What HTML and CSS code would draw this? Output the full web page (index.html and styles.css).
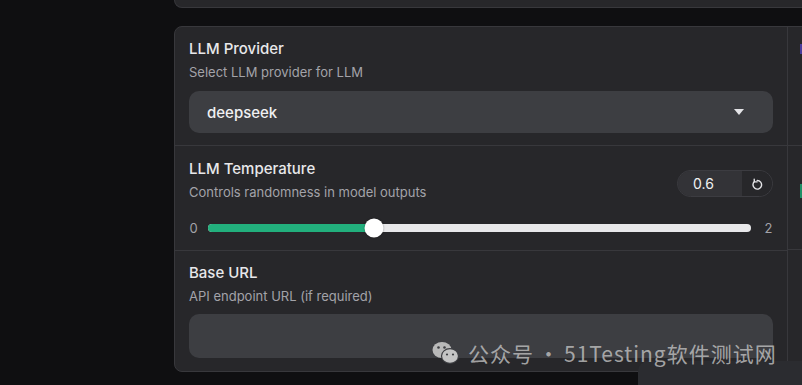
FILE: index.html
```html
<!DOCTYPE html>
<html lang="en">
  <head>
    <meta charset="UTF-8" />
    <meta name="viewport" content="width=device-width, initial-scale=1.0" />
    <title>LLM Settings</title>
    <link rel="stylesheet" href="styles.css">
  </head>
  <body>
    <div class="page">
      <div class="prevCard"></div>
      <section class="settings">
        <div class="col">
          <div class="field">
            <label class="fieldLabel">LLM Provider</label>
            <p class="fieldInfo">Select LLM provider for LLM</p>
            <div class="select">
              <span>deepseek</span>
              <svg class="caret" width="10" height="6" viewBox="0 0 10 6"><path d="M0 0h10L5 6z" fill="#e4e4e7"/></svg>
            </div>
          </div>
          <div class="field">
            <div class="fieldHead">
              <div>
                <label class="fieldLabel">LLM Temperature</label>
                <p class="fieldInfo">Controls randomness in model outputs</p>
              </div>
              <div class="numBox">
                <span class="numVal">0.6</span>
                <button class="resetBtn">
                  <svg width="12" height="12" viewBox="0 0 12 12" fill="none" stroke="#e4e4e7" stroke-width="1.4" stroke-linecap="round" stroke-linejoin="round">
                    <path d="M3.4 3.6A4.3 4.3 0 1 0 6.2 2.5"/>
                    <path d="M3.2 1.2L3.4 3.8L6 3.9"/>
                  </svg>
                </button>
              </div>
            </div>
            <div class="slider">
              <span class="sliderEnd">0</span>
              <div class="track">
                <div class="fill" style="width: 30.5%"></div>
                <div class="thumb" style="left: 30.5%"></div>
              </div>
              <span class="sliderEnd">2</span>
            </div>
          </div>
          <div class="field last">
            <label class="fieldLabel">Base URL</label>
            <p class="fieldInfo">API endpoint URL (if required)</p>
            <div class="textInput"></div>
          </div>
        </div>
        <div class="col side">
          <div class="sideBlock">
            <span class="mark purple"></span>
          </div>
          <div class="sideBlock">
            <span class="mark green"></span>
          </div>
          <div class="sideBlock"></div>
        </div>
      </section>
    </div>
    <div class="toastEdge"></div>
    <div class="watermark">
      <svg width="28" height="24" viewBox="0 0 28 24">
        <ellipse cx="10" cy="9" rx="9.5" ry="8" fill="#b9b9b9"/>
        <ellipse cx="18" cy="15" rx="8.5" ry="7.3" fill="#c4c4c4" stroke="#3d3e42" stroke-width="1.2"/>
        <circle cx="6.5" cy="6.5" r="1.3" fill="#3d3e42"/>
        <circle cx="12.5" cy="6.5" r="1.3" fill="#3d3e42"/>
        <circle cx="15" cy="13.5" r="1.1" fill="#3d3e42"/>
        <circle cx="21" cy="13.5" r="1.1" fill="#3d3e42"/>
      </svg>
      <span>公众号<span class="dot">·</span>51Testing软件测试网</span>
    </div>
  </body>
</html>
```

FILE: styles.css
```css
html {
  background: #0f0f11;
}
body {
  margin: 0;
  font-family: Inter, 'Noto Sans', sans-serif;
  color: #e8e8ea;
  overflow: hidden;
  height: 385px;
  position: relative;
}
.page {
  padding-left: 174px;
}
.prevCard {
  height: 7px;
  background: #27272a;
  border: 1px solid #38383c;
  border-top: none;
  border-radius: 0 0 0 8px;
  margin-right: -10px;
}
.settings {
  margin-top: 18px;
  margin-right: -200px;
  display: grid;
  grid-template-columns: 612px 1fr;
  background: #27272a;
  border: 1px solid #38383c;
  border-radius: 8px;
}
.col {
  display: flex;
  flex-direction: column;
}
.col.side {
  border-left: 1px solid #38383c;
}
.field {
  padding: 12px 14px 12px 14px;
  border-bottom: 1px solid #38383c;
}
.field.last {
  border-bottom: none;
  padding-bottom: 13px;
}
.fieldLabel {
  display: block;
  font-size: 15px;
  font-weight: 500;
  line-height: 20px;
  color: #e8e8ea;
}
.fieldInfo {
  margin: 4px 0 0;
  font-size: 13px;
  line-height: 18px;
  color: #a3a3a9;
}
.select {
  margin-top: 10px;
  height: 42px;
  background: #3d3e42;
  border-radius: 10px;
  display: flex;
  align-items: center;
  justify-content: space-between;
  padding: 0 29px 0 18px;
  font-size: 15px;
  font-weight: 500;
  color: #f0f0f2;
}
.fieldHead {
  display: flex;
  justify-content: space-between;
  align-items: flex-start;
}
.fieldHead .fieldLabel {
  margin-top: 1px;
}
.numBox {
  margin-top: 12px;
  display: flex;
  height: 27px;
  width: 96px;
  border: 1px solid #3c3c41;
  border-radius: 14px;
  overflow: hidden;
  box-sizing: border-box;
}
.numVal {
  flex: 1;
  background: #333337;
  font-size: 14px;
  line-height: 25px;
  padding-left: 15px;
  color: #f0f0f2;
}
.resetBtn {
  width: 30px;
  border: none;
  background: #27272a;
  padding: 0;
  display: flex;
  align-items: center;
  justify-content: center;
}
.slider {
  margin-top: 17px;
  display: flex;
  align-items: center;
  gap: 10px;
  height: 20px;
}
.sliderEnd {
  font-size: 13px;
  color: #a3a3a9;
  width: 9px;
  text-align: center;
}
.track {
  flex: 1;
  height: 8px;
  border-radius: 4px;
  background: #e8e8ea;
  position: relative;
  margin-right: 3px;
}
.fill {
  height: 100%;
  border-radius: 4px;
  background: #22b07d;
}
.thumb {
  position: absolute;
  top: 50%;
  width: 19px;
  height: 19px;
  border-radius: 50%;
  background: #fff;
  transform: translate(-50%, -50%);
  box-shadow: 0 0 2px rgba(0, 0, 0, 0.4);
}
.textInput {
  margin-top: 9px;
  height: 44px;
  background: #3d3e42;
  border-radius: 10px;
}
.sideBlock {
  height: 119px;
  border-bottom: 1px solid #38383c;
  padding: 17px 0 0 12px;
  box-sizing: border-box;
}
.sideBlock:nth-child(2) {
  height: 104px;
  padding-top: 38px;
}
.sideBlock:last-child {
  border-bottom: none;
}
.mark {
  display: block;
  width: 6px;
  height: 10px;
}
.mark.purple {
  background: #4a3c9c;
}
.mark.green {
  background: #1f8f66;
  height: 14px;
}
.toastEdge {
  position: absolute;
  left: 638px;
  top: 361px;
  width: 180px;
  height: 40px;
  background: #2b2c30;
  border-radius: 10px 0 0 0;
}
.watermark {
  position: absolute;
  left: 432px;
  top: 339px;
  display: flex;
  align-items: center;
  gap: 8px;
  font-family: 'Noto Sans CJK SC', sans-serif;
  font-size: 21px;
  line-height: 28px;
  color: rgba(195, 195, 195, 0.8);
  letter-spacing: 1px;
}
.dot {
  margin: 0 4px;
}
```
